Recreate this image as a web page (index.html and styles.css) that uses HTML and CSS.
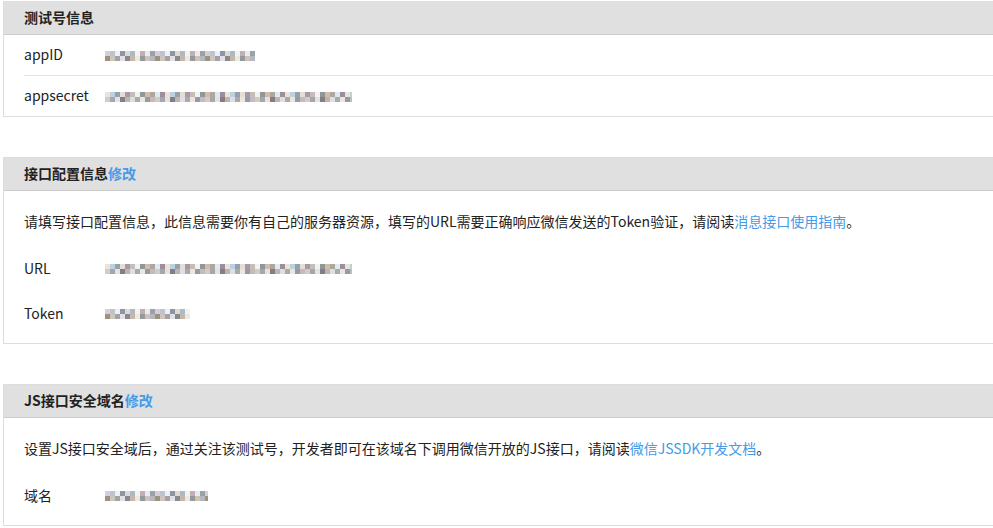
FILE: index.html
```html
<!DOCTYPE html>
<html>
<head>
<meta charset="utf-8">
<title>测试号管理</title>
<link rel="stylesheet" href="styles.css">
</head>
<body>
<div class="page">
    <div class="panel">
        <div class="panel-hd">测试号信息</div>
        <ul class="info-list">
            <li><span class="label">appID</span><span class="blur" style="width:150px"></span></li>
            <li><span class="label">appsecret</span><span class="blur alt" style="width:247px"></span></li>
        </ul>
    </div>

    <div class="panel">
        <div class="panel-hd">接口配置信息<a href="#" class="edit">修改</a></div>
        <div class="panel-bd">
            <p class="desc">请填写接口配置信息，此信息需要你有自己的服务器资源，填写的URL需要正确响应微信发送的Token验证，请阅读<a href="#">消息接口使用指南</a>。</p>
            <div class="field"><span class="label">URL</span><span class="blur alt" style="width:247px"></span></div>
            <div class="field"><span class="label">Token</span><span class="blur" style="width:85px"></span></div>
        </div>
    </div>

    <div class="panel">
        <div class="panel-hd">JS接口安全域名<a href="#" class="edit">修改</a></div>
        <div class="panel-bd">
            <p class="desc">设置JS接口安全域后，通过关注该测试号，开发者即可在该域名下调用微信开放的JS接口，请阅读<a href="#">微信JSSDK开发文档</a>。</p>
            <div class="field"><span class="label">域名</span><span class="blur" style="width:103px"></span></div>
        </div>
    </div>
</div>
</body>
</html>
```

FILE: styles.css
```css
*{padding:0;margin:0;}
li{list-style:none;}
a{color:#459ae9;text-decoration:none;}
body{
    background:#fff;
    font-family:"Noto Sans CJK SC","Microsoft YaHei",sans-serif;
    font-size:14px;
    color:#222;
}
.page{
    padding:1px 0 0 3px;
}
.panel{
    border:1px solid #ddd;
    border-right:none;
    margin-bottom:40px;
}
.panel:last-child{
    margin-bottom:0;
}
.panel-hd{
    height:30px;
    line-height:30px;
    padding:0 0 2px 20px;
    background:#e0e0e0;
    border-bottom:1px solid #ccc;
    font-weight:bold;
}
.panel-hd .edit{
    font-weight:bold;
}
.info-list li{
    display:flex;
    align-items:center;
    height:38px;
    padding-bottom:2px;
    margin-left:20px;
    border-top:1px solid #e4e4e4;
}
.info-list li:first-child{
    border-top:none;
}
.label{
    width:81px;
    flex-shrink:0;
}
.panel-bd{
    padding:20px 0 7px 20px;
}
.desc{
    line-height:20px;
    margin-bottom:15px;
}
.field{
    display:flex;
    align-items:center;
    box-sizing:border-box;
    height:45px;
    padding-bottom:2px;
}
.blur{
    display:inline-block;
    height:10px;
    margin-top:3px;
    background:
        repeating-linear-gradient(90deg,#d4cfdc 0 5px,#bcc4d0 5px 10px,#eef0f4 10px 15px,#8e96a6 15px 20px,#e0dad2 20px 25px,#a8bcc8 25px 30px,#f4f2ea 30px 35px,#c0aeb4 35px 40px,#e8ecf0 40px 45px,#9aa2a8 45px 50px) top/100% 5px no-repeat,
        repeating-linear-gradient(90deg,#9c927e 0 5px,#ccc6bc 5px 10px,#a2a2a8 10px 15px,#e2e2e6 15px 20px,#88888e 20px 25px,#c4b8ac 25px 30px,#ece8e2 30px 35px,#949a9a 35px 40px,#d0c2b8 40px 45px,#b4b8be 45px 50px) bottom/100% 5px no-repeat;
}
.blur.alt{
    background:
        repeating-linear-gradient(90deg,#f0e2d2 0 5px,#b8d2e2 5px 10px,#96a0ae 10px 15px,#e4ded4 15px 20px,#a898ac 20px 25px,#c4beb4 25px 30px,#f2f2f2 30px 35px,#8e9898 35px 40px,#d6bca8 40px 45px,#aca89e 45px 50px,#dceaf2 50px 55px,#9c8e9c 55px 60px) top/100% 5px no-repeat,
        repeating-linear-gradient(90deg,#d2ccc2 0 5px,#a4a8ae 5px 10px,#e8e2dc 10px 15px,#847c86 15px 20px,#c0b6a8 20px 25px,#dedee8 25px 30px,#a8aca2 30px 35px,#ece6dc 35px 40px,#929ca2 40px 45px,#c8b8c2 45px 50px) bottom/100% 5px no-repeat;
}
```
